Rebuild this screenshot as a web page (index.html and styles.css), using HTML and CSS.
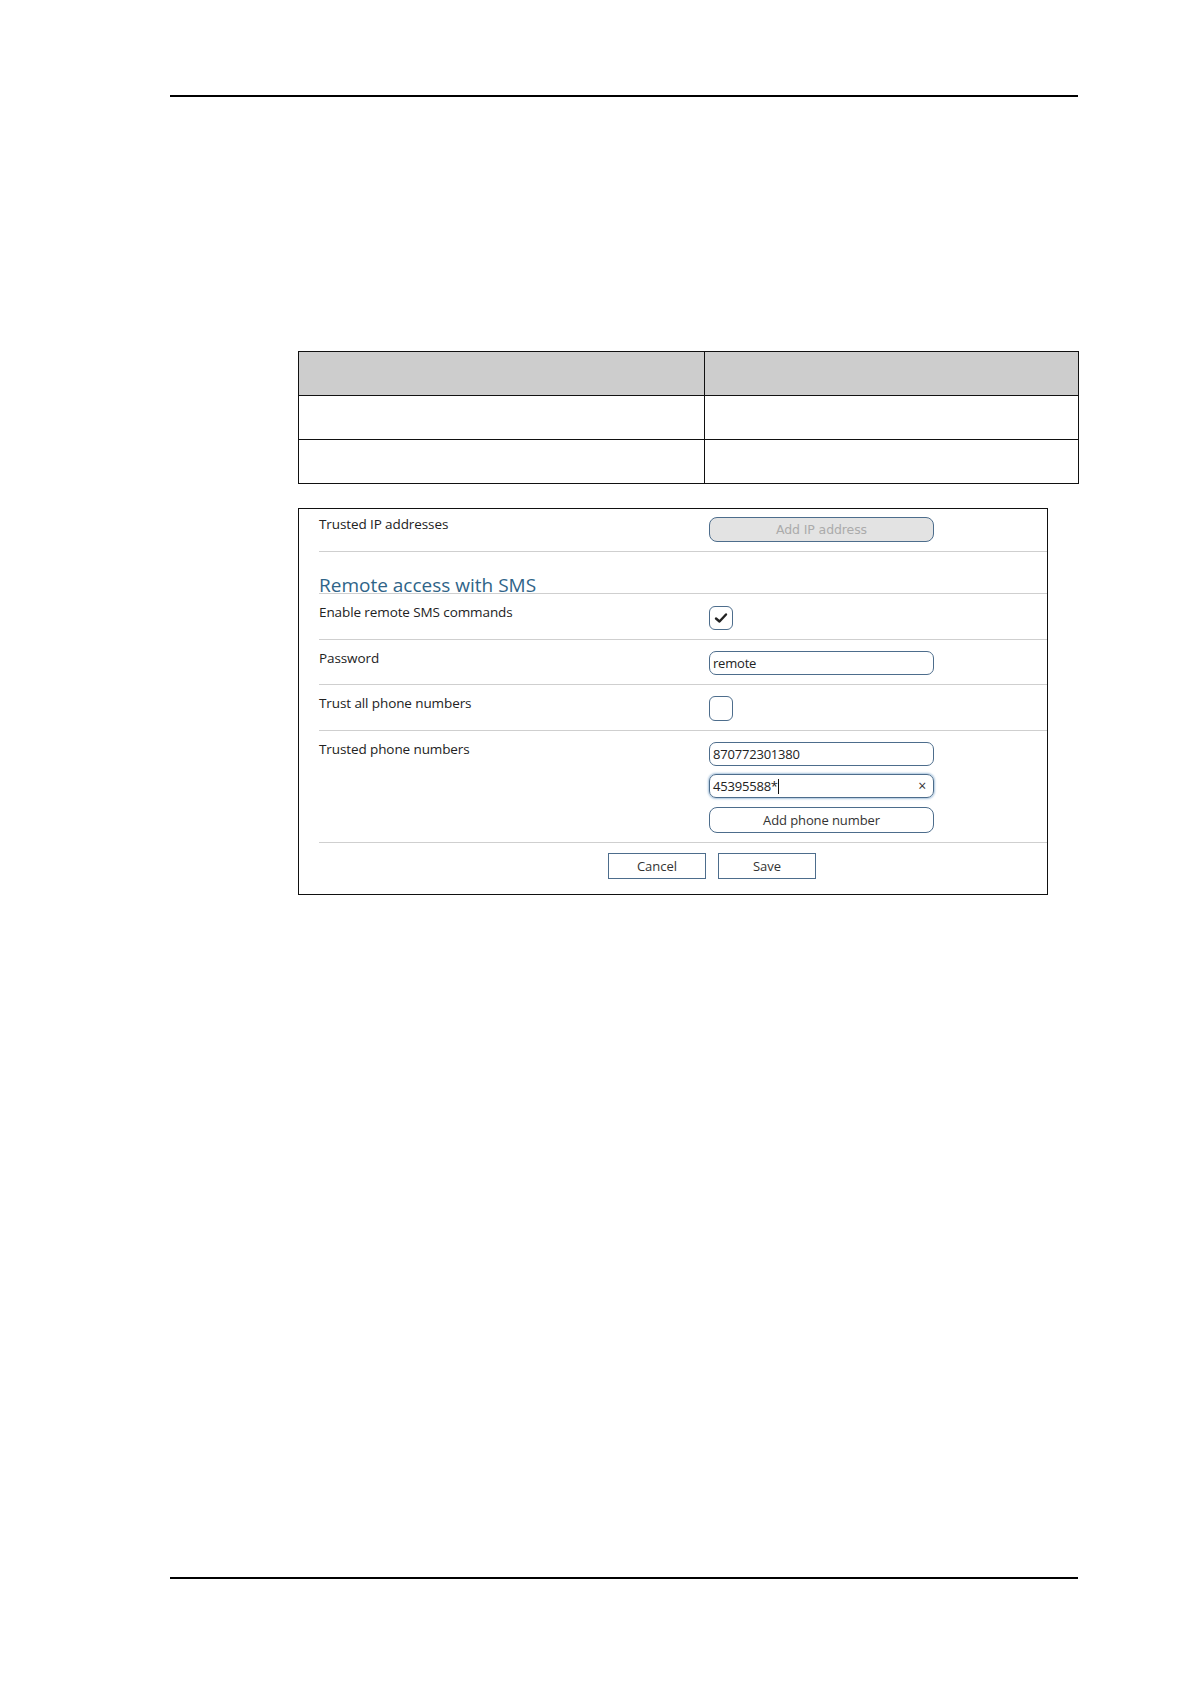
FILE: index.html
```html
<!DOCTYPE html>
<html>
<head>
    <meta charset="utf-8" />
    <title>Remote access with SMS</title>
    <link rel="stylesheet" href="styles.css">
</head>
<body>
    <div class="page">
        <div class="rule top-rule"></div>

        <table class="spec">
            <tr class="head"><td></td><td></td></tr>
            <tr><td></td><td></td></tr>
            <tr><td></td><td></td></tr>
        </table>

        <div class="shot">
            <div class="row row-ip">
                <div class="label">Trusted IP addresses</div>
                <div class="control">
                    <button class="pill disabled">Add IP address</button>
                </div>
            </div>

            <div class="row row-heading">
                <h2>Remote access with SMS</h2>
            </div>

            <div class="row row-check">
                <div class="label">Enable remote SMS commands</div>
                <div class="control">
                    <span class="check checked">
                        <svg width="14" height="12" viewBox="0 0 14 12"><path d="M2 6.5 L5.5 9.5 L12 2.5" fill="none" stroke="#222" stroke-width="2.4" stroke-linecap="round" stroke-linejoin="round"/></svg>
                    </span>
                </div>
            </div>

            <div class="row row-pass">
                <div class="label">Password</div>
                <div class="control">
                    <div class="field">remote</div>
                </div>
            </div>

            <div class="row row-check2">
                <div class="label">Trust all phone numbers</div>
                <div class="control">
                    <span class="check"></span>
                </div>
            </div>

            <div class="row row-phones">
                <div class="label">Trusted phone numbers</div>
                <div class="control">
                    <div class="field">870772301380</div>
                    <div class="field focus">45395588*<span class="caret"></span><span class="clear">&times;</span></div>
                    <button class="pill">Add phone number</button>
                </div>
            </div>

            <div class="actions">
                <button class="btn">Cancel</button>
                <button class="btn">Save</button>
            </div>
        </div>

        <div class="rule bottom-rule"></div>
    </div>
</body>
</html>
```

FILE: styles.css
```css
body {
    margin: 0;
    padding: 0;
    background: #fff;
    font-family: "Open Sans", "DejaVu Sans", sans-serif;
}

.page {
    width: 1190px;
    height: 1684px;
    overflow: hidden;
}

.rule {
    height: 2px;
    background: #000;
    margin-left: 170px;
    width: 908px;
}
.top-rule {
    margin-top: 95px;
}
.bottom-rule {
    margin-top: 682px;
}

/* empty spec table */
.spec {
    margin: 254px 0 0 298px;
    width: 781px;
    border-collapse: collapse;
}
.spec td {
    border: 1.5px solid #111;
    height: 43px;
    padding: 0;
}
.spec td:first-child {
    width: 405px;
}
.spec .head td {
    background: #cdcdcd;
}

/* screenshot panel */
.shot {
    margin: 24px 0 0 298px;
    width: 750px;
    border: 1px solid #111;
    padding-left: 20px;
    box-sizing: border-box;
    font-size: 13.5px;
    color: #222;
}

.row {
    display: flex;
    border-bottom: 1px solid #cfcfcf;
    padding-top: 9px;
}
.label {
    width: 390px;
    line-height: 16px;
    margin-top: 1px;
    letter-spacing: -0.1px;
}
.control {
    width: 225px;
    display: flex;
    flex-direction: column;
}

.row-ip {
    padding-top: 6px;
    padding-bottom: 9px;
}
.row-ip .control {
    padding-top: 2px;
}

.row-heading {
    height: 41px;
    padding-top: 0;
    align-items: flex-end;
}
.row-heading h2 {
    margin: 0;
    font-weight: normal;
    font-size: 19px;
    line-height: 16px;
    color: #2f6488;
}

.row-check {
    padding-bottom: 9px;
}
.row-check .control {
    padding-top: 3px;
}
.row-pass {
    padding-bottom: 9px;
}
.row-pass .control {
    padding-top: 2px;
}
.row-check2 {
    padding-bottom: 9px;
}
.row-check2 .control {
    padding-top: 2px;
}
.row-phones {
    padding-bottom: 9px;
}
.row-phones .control {
    padding-top: 2px;
}

.check {
    display: flex;
    align-items: center;
    justify-content: center;
    width: 22px;
    height: 22px;
    border: 1.5px solid #4d6d8c;
    border-radius: 6px;
    background: #fff;
}
.row-check2 .check {
    height: 23px;
}

.field {
    position: relative;
    height: 22px;
    line-height: 22px;
    border: 1.5px solid #4d6d8c;
    border-radius: 7px;
    padding-left: 3px;
    font-size: 13px;
    color: #222;
    letter-spacing: -0.2px;
}
.field + .field {
    margin-top: 8px;
}
.field.focus {
    box-shadow: 0 0 2px 1px #a9c4dd;
}
.caret {
    display: inline-block;
    width: 1px;
    height: 15px;
    background: #111;
    vertical-align: -3px;
}
.clear {
    position: absolute;
    right: 7px;
    top: 0;
    font-size: 14px;
    color: #333;
}

.pill {
    height: 25px;
    border: 1.5px solid #4d6d8c;
    border-radius: 8px;
    background: #fff;
    font-family: "Open Sans", "DejaVu Sans", sans-serif;
    font-size: 13px;
    color: #333;
    padding: 0;
    letter-spacing: -0.1px;
}
.pill.disabled {
    background: #e3e3e3;
    color: #ababab;
    font-family: "DejaVu Sans", sans-serif;
    font-size: 12.5px;
}
.row-phones .pill {
    margin-top: 9px;
    height: 26px;
}

.actions {
    display: flex;
    gap: 12px;
    padding: 10px 0 15px 289px;
}
.btn {
    width: 98px;
    height: 26px;
    border: 1.5px solid #4d6d8c;
    background: #fff;
    font-family: "Open Sans", "DejaVu Sans", sans-serif;
    font-size: 13px;
    color: #333;
    padding: 0;
}
```
